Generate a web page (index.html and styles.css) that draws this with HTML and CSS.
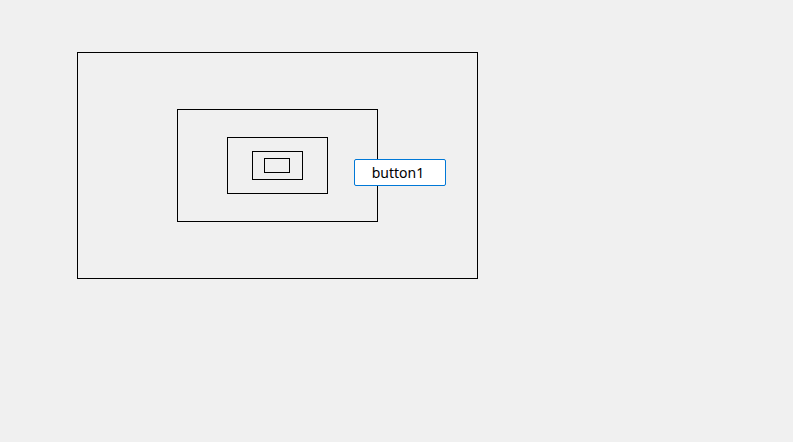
FILE: index.html
```html
<!DOCTYPE html>
<html>
<head>
<meta charset="utf-8">
<link rel="stylesheet" href="styles.css">
</head>
<body>
<div class="panel outer">
  <div class="panel box2">
    <div class="panel box3">
      <div class="panel box4">
        <div class="panel box5"></div>
      </div>
    </div>
  </div>
  <button class="btn">button1</button>
</div>
</body>
</html>
```
FILE: styles.css
```css
html, body {
  margin: 0;
  padding: 0;
  background: #f0f0f0;
}
body {
  width: 793px;
  height: 442px;
  overflow: hidden;
  padding-top: 52px;
  padding-left: 77px;
  box-sizing: border-box;
}
.panel {
  box-sizing: border-box;
  border: 1px solid #000;
}
.outer {
  position: relative;
  width: 401px;
  height: 227px;
  padding: 56px 0 0 99px;
}
.box2 {
  width: 201px;
  height: 113px;
  padding: 27px 0 0 49px;
}
.box3 {
  width: 101px;
  height: 57px;
  padding: 13px 0 0 24px;
}
.box4 {
  width: 51px;
  height: 29px;
  padding: 6px 0 0 11px;
}
.box5 {
  width: 26px;
  height: 15px;
}
.btn {
  position: absolute;
  left: 276px;
  top: 106px;
  width: 92px;
  height: 27px;
  box-sizing: border-box;
  margin: 0;
  padding: 0 4px 0 0;
  background: #fff;
  border: 1px solid #0078d7;
  border-radius: 2px;
  font-family: "Noto Sans", sans-serif;
  font-size: 14px;
  color: #000;
  display: flex;
  align-items: center;
  justify-content: center;
}
```
